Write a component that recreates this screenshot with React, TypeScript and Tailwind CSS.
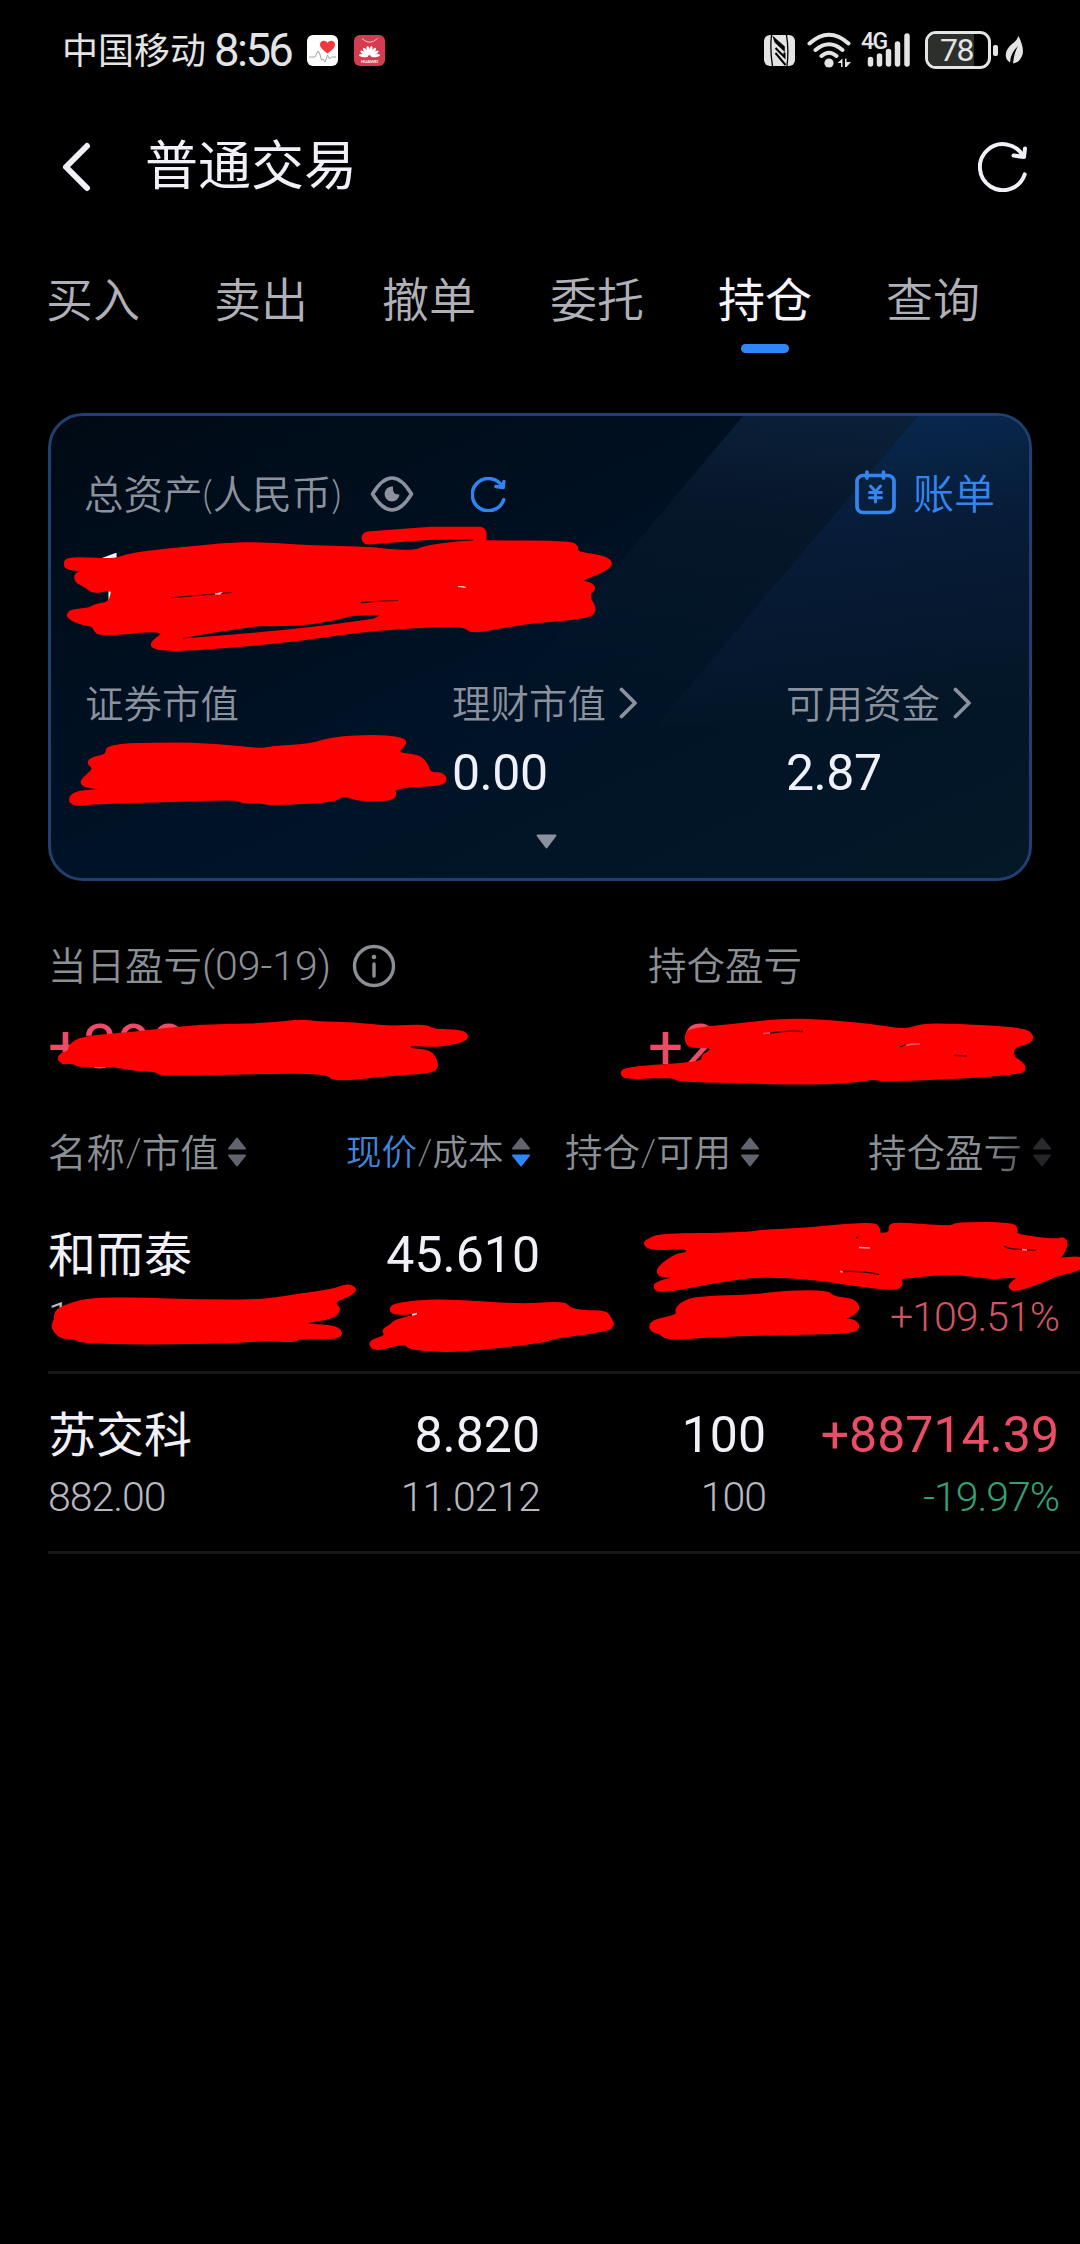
import React from "react";

type P = [number, number];

/* Smooths a closed outline by running quadratic curves through edge midpoints. */
function blob(flat: number[]): string {
  const pts: P[] = [];
  for (let i = 0; i < flat.length; i += 2) pts.push([flat[i], flat[i + 1]]);
  const n = pts.length;
  const mid = (a: P, b: P): P => [(a[0] + b[0]) / 2, (a[1] + b[1]) / 2];
  const start = mid(pts[n - 1], pts[0]);
  let d = `M${start[0]} ${start[1]}`;
  for (let i = 0; i < n; i++) {
    const m = mid(pts[i], pts[(i + 1) % n]);
    d += `Q${pts[i][0]} ${pts[i][1]} ${m[0]} ${m[1]}`;
  }
  return d + "Z";
}

const SCRIBBLES: number[][] = [
  [67,558,90,558,104,559,117,558.5,125,555.5,145,551.7,190,547,229,543.3,260,542.7,305,545.7,376,547.7,386,550,414,551,424,546.7,460,541.3,489,541,571,541.7,578,546.7,577,552.7,604,555.7,613.6,563.3,604,571.7,579,580.7,592,583.3,595.6,589.3,588,595,597,610,588,618.3,527,622.7,470,634,465,625,397,628.3,355,632.3,290,641.7,198,650,156,650.3,149,643.3,169,629.3,100,636,94,630,93,626,80,624,68,618.3,67.5,613.3,72,610,89,608.3,95,605,108,602.7,111,596,112,589.3,93,593.3,87,587.7,75,581.7,75,573.3,85,570.7,66,569.3,64,563.3],
  [106,745,168,742.7,216,744.3,261,749.3,268,747,311,744.3,330,738,371,735,402,737.3,407,743.3,396,753.3,419,755,427,763.3,430,773.3,442,772.7,447,779.3,442,785,394,787.7,396,795,392,800,361,801,342,795,335,801.7,268,805,262,802.3,243,803.3,237,799,161,801.7,95,803.3,75,806,68,800,75,791,109,789.3,85,787.3,80,781.7,87,775,94,768.3,87,763.3,92,757.3,107,755],
  [69,1045,82,1036.7,133,1032.7,178,1027.3,209,1025,268,1024,302,1019.7,316,1022.3,354,1022.7,388,1027,426,1024.7,433,1030,462,1030,469,1036.7,462,1042.3,436,1046.7,409,1044.7,410,1049.3,431,1050,439,1065,433,1072.7,392,1075,333,1081.3,327,1072.7,250,1073.3,161,1075.7,155,1070.7,135,1070.7,114,1066,78,1066.7,73,1062.7,63,1064,57,1058.3,63,1052.3,69,1051.7],
  [685,1035,690,1029,733,1024.7,781,1019.3,815,1019.7,874,1024.7,905,1030.3,922,1024,953,1024.3,1025,1028,1034,1036.7,1029,1043.3,1014,1046.7,1013,1056.7,1022,1062.3,1026,1068.3,1020,1074,953,1078.3,881,1081.3,876,1078.3,850,1082.7,798,1084.3,733,1082.3,678,1081.3,672,1076.7,626,1079,620,1073.3,626,1067.3,702,1062.7,702,1055,711,1050.7,709,1046.7,691,1047.7,686,1043.3],
  [55,1310,72,1302.7,91,1298.7,137,1298,198,1300.3,265,1300.3,298,1294.3,332,1290,348,1284,357,1289,351,1295,333,1302.3,341,1308.3,334,1318.3,306,1322.3,307,1324.3,336,1326,343,1333.3,336,1339,301,1337.7,294,1342,267,1340,233,1342.7,145,1344,80,1342.7,75,1338.3,60,1338.3,51,1326.7,55,1320],
  [389,1309.3,395,1303.3,439,1299,520,1305,564,1301.7,570,1308.3,583,1311,606,1311,611,1318.3,614,1325,608,1330.7,552,1338.3,546,1341.7,458,1352.3,409,1349.3,405,1342.7,376,1351,369,1345,372,1340,386,1336,382,1330,391,1325,395,1320,433,1311,395,1315.3],
  [643,1243,650,1238,663,1234,740,1233.3,767,1230,800,1229,873,1222,880,1228,879,1234,890,1233,889,1225,897,1222.7,950,1227,957,1222.7,1013,1223,1018,1230,1015,1235,1057,1240,1063,1237,1068,1243,1063,1255,1058,1259,1084,1256,1084,1269,1055,1276,1050,1279,1015,1292,1008,1287,1013,1281,1020,1277,1000,1277.5,995,1279,950,1273,907,1278,900,1278,903,1285,895,1290,860,1286,813,1279,760,1276,717,1282,660,1293,653,1287,658,1281,693,1274,662,1278,656,1271,663,1263,677,1254,687,1253,687,1248,650,1250],
  [675,1310,682,1302,697,1297,757,1295,787,1291,828,1291,833,1297,853,1299,860,1307,855,1314,843,1319,855,1320,860,1327,853,1333,800,1334,717,1336,667,1340,660,1333,652,1332,649,1325,655,1320,678,1315],
];

function Scribbles() {
  return (
    <svg className="pointer-events-none absolute left-0 top-0 h-[1400px] w-[1080px]" viewBox="0 0 1080 1400" fill="none">
      {SCRIBBLES.map((s, i) => (
        <path key={i} d={blob(s)} fill="#ff0000" stroke="#ff0000" strokeWidth="1.5" strokeLinejoin="round" />
      ))}
      <path d="M368 538L431 533.3H480V546" stroke="#ff0000" strokeWidth="13" strokeLinecap="round" strokeLinejoin="round" />
      <path d="M183 638Q222 631 260 626Q312 628 352 616L380 615L374 618.5Q300 630 183 638.5Z" fill="#00101e" />
      <path d="M171 597.500L232 592.500L214 594L171 598ZM361 603Q380 600.500 398 600.500L361 602Z" fill="#00101e" stroke="#00101e" strokeWidth=".4" />
      <path d="M215 594L222 592.3L220 594.3ZM458 586.5L464 586.7L466 587.5Z" fill="#eee" stroke="#eee" strokeWidth=".6" />
      <path d="M770 1033Q787 1030.500 803 1031.500M900 1047L906 1044.500M954 1055.3L967 1055.8M842 1271.5Q862 1270.500 879 1274.5M1004 1246Q1008 1250 1036 1250M856 1237.5H858" stroke="#2c0505" strokeWidth="1.3" />
      <path d="M763 1033.5L770 1033M906 1045.500Q911 1043.500 920 1044" stroke="#ee4b66" strokeWidth="1.6" />
      <path d="M859 1247.5L870 1248M840 1271.5L843 1272M1022 1249.5L1027 1250" stroke="#f0a0a8" strokeWidth="1.3" />
      <path d="M412 1315L417 1313.5" stroke="#ddd" strokeWidth="1.600" />
    </svg>
  );
}

function Reload({ className, width }: { className: string; width: number }) {
  return (
    <svg className={className} viewBox="0 0 50 50" fill="none" stroke="currentColor" strokeWidth={width} strokeLinecap="round" strokeLinejoin="round">
      <path d="M46.7 32.4A23 23 0 1 1 45 14" />
      <path d="M47 6.500L46 15L35.500 13.500" />
    </svg>
  );
}

function Chevron() {
  return (
    <svg className="h-[32px] w-[19px]" viewBox="0 0 19 32" fill="none" stroke="#8b919d" strokeWidth="3.8" strokeLinecap="round" strokeLinejoin="round">
      <path d="M2.500 2.500L16 16L2.500 29.500" />
    </svg>
  );
}

function Sort({ down = "#61646e", up = "#61646e" }: { down?: string; up?: string }) {
  return (
    <svg className="h-[30px] w-[18px] shrink-0" viewBox="0 0 18 30">
      <path d="M9 1.500L17 11.500H1Z" fill={up} stroke={up} strokeWidth="2" strokeLinejoin="round" />
      <path d="M9 28.500L17 18.500H1Z" fill={down} stroke={down} strokeWidth="2" strokeLinejoin="round" />
    </svg>
  );
}

function StatusBar() {
  return (
    <div className="flex h-[100px] items-center pl-[62px] text-[#e4e4e4]">
      <span className="w-[152px] text-[36px] leading-[40px]">中国移动</span>
      <span className="w-[93px] pt-[2px] font-[Roboto] text-[45.500px] leading-[50px] tracking-[-2.6px]">8:56</span>
      <svg className="h-[31px] w-[31px]" viewBox="0 0 31 31">
        <rect width="31" height="31" rx="6" fill="#fff" />
        <path d="M20.500 18.500C15 14.500 13 12 13 9.500C13 5.500 18.500 4.500 20.500 8C22.500 4.500 28 5.500 28 9.500C28 12 26 14.500 20.500 18.500Z" fill="#f0383f" />
        <path d="M2 22H8L9.500 19L11 16L12.500 18L14.500 25L16 24L18 27L20.500 20L22.500 24L24.500 22H29" fill="none" stroke="#999" strokeWidth=".9" />
      </svg>
      <svg className="ml-[16px] h-[31px] w-[31px]" viewBox="0 0 31 31">
        <rect width="31" height="31" rx="6" fill="#d63c50" />
        <path d="M8 3.500Q15.500 11 23.500 3.500" fill="none" stroke="#f5c3c8" strokeWidth="1" />
        <g fill="#fff">
          {[-82, -58, -36, -12, 12, 36, 58, 82].map((a) => (
            <ellipse key={a} cx="15.500" cy="15.500" rx="1.500" ry="4.600" transform={`rotate(${a} 15.500 21.500)`} />
          ))}
        </g>
        <text x="15.500" y="28" textAnchor="middle" fontSize="4.200" fontWeight="700" fill="#fff" textLength="17">HUAWEI</text>
      </svg>

      <svg className="ml-[379px] h-[31px] w-[31px]" viewBox="0 0 31 31" fill="none" stroke="#000">
        <rect width="31" height="31" rx="6" fill="#e4e4e4" stroke="none" />
        <path d="M7.500 0Q5.800 15 8.500 31M22.500 0Q25 15 23 31" strokeWidth="1.300" />
        <path d="M8.500 1L20.500 11.500V16.500L10.500 7" fill="#000" strokeWidth=".6" />
        <path d="M11.500 13L20.500 22V17.500M11.500 18L21.500 30" strokeWidth="2" />
      </svg>
      <svg className="ml-[12px] h-[36px] w-[46px]" viewBox="0 0 46 36" fill="none" stroke="#e4e4e4" strokeWidth="4" strokeLinecap="round">
        <path d="M2.500 11.500Q22 -6 41.500 11.500M8.500 18Q22 6.500 35.500 18M14.500 24Q22 17.500 29.500 24" />
        <circle cx="22" cy="31" r="4.600" fill="#e4e4e4" stroke="none" />
        <path d="M30.500 31L35.500 26.500V35H34V31ZM38 26.500H39.500V30H44L39.500 35H38Z" fill="#e4e4e4" stroke="none" />
      </svg>
      <div className="relative ml-[9px] h-[36px] w-[52px]">
        <svg className="h-[36px] w-[52px]" viewBox="0 0 52 36" fill="none" stroke="#e4e4e4" strokeWidth="5.500" strokeLinecap="round">
          <path d="M8.500 27.500V32M17.500 24V32M26.500 19.500V32M35.500 12V32M45 4V32" />
        </svg>
        <span className="absolute -left-[1px] -top-[2px] font-[Roboto] text-[23px] font-medium leading-[24px] tracking-[-1.500px]">4G</span>
      </div>
      <div className="ml-[11px] flex h-[38px] w-[66px] rounded-[11px] border-[3px] border-[#e4e4e4]">
        <div className="flex w-[46px] items-center justify-end rounded-l-[8px] bg-[#2d2f2d] pr-[1px] font-[Roboto] text-[32px] leading-[30px] tracking-[-1.500px]">78</div>
      </div>
      <div className="ml-[2px] h-[11px] w-[5px] rounded-[2px] bg-[#e4e4e4]" />
      <svg className="ml-[7px] h-[30px] w-[19px]" viewBox="0 0 19 30">
        <path d="M13.500 1Q20 14 17 21Q14 28 8 28.500Q9 18 13 11Q5.500 18 5 27.500Q-1 24 1.500 16Q4 10.500 9 7.500Q12 5 13.500 1Z" fill="#e4e4e4" />
      </svg>
    </div>
  );
}

function Card() {
  return (
    <section className="relative mx-[48px] mt-[60px] h-[468px] overflow-hidden rounded-[35px] border-[3px] border-[#20406f] bg-linear-to-br from-[#000a14] via-[#001226] to-[#051828] pt-[53px]">
      <svg className="absolute inset-0 h-full w-full" viewBox="0 0 978 462" preserveAspectRatio="none">
        <defs>
          <linearGradient id="beamA" x1="0.600" y1="0" x2="0.450" y2="1">
            <stop offset="0" stopColor="#0a2038" />
            <stop offset=".3" stopColor="#07172b" />
            <stop offset="1" stopColor="#051828" stopOpacity="0" />
          </linearGradient>
          <linearGradient id="beamB" x1="0.600" y1="0" x2="0.750" y2="1">
            <stop offset="0" stopColor="#08284e" />
            <stop offset=".35" stopColor="#071c38" />
            <stop offset=".7" stopColor="#06182f" />
            <stop offset="1" stopColor="#051828" stopOpacity="0" />
          </linearGradient>
        </defs>
        <path d="M692 0H978V300H440Z" fill="url(#beamA)" />
        <path d="M867 0H978V310H605Z" fill="url(#beamB)" />
      </svg>
      <div className="relative">
        <div className="flex h-[50px] items-center pl-[33px] text-[39px] leading-[50px] text-[#8b919d]">
          <span className="w-[286px] text-[39.500px] font-[350]">总资产(人民币)</span>
          <svg className="h-[36px] w-[44px]" viewBox="0 0 44 36" fill="none">
            <path d="M2.500 18Q22 -14 41.500 18Q22 50 2.500 18Z" stroke="currentColor" strokeWidth="3.600" strokeLinejoin="round" />
            <path d="M23 10.500A7.500 7.500 0 1 0 29.500 18.500Q22 19 23 10.500Z" fill="currentColor" />
          </svg>
          <Reload className="ml-[57px] h-[35px] w-[35px] text-[#3084f0]" width={5} />
          <svg className="-mt-[4px] ml-[349px] h-[46px] w-[41px] text-[#3486ee]" viewBox="0 0 41 46" fill="none" stroke="currentColor" strokeWidth="3.700" strokeLinecap="round">
            <rect x="2" y="6.500" width="37" height="37" rx="6" />
            <path d="M12 3V9M28.500 3V9" />
            <path d="M15.500 17L20.500 22.500L25.500 17M20.500 22.500V33M14.500 23.500H26.500M14.500 28.800H26.500" strokeWidth="3" />
          </svg>
          <span className="ml-[17px] text-[41px] font-[350] text-[#3486ee]">账单</span>
        </div>
        <div className="mt-[25px] pl-[40px] font-[Roboto] text-[68px] font-medium leading-[70px] text-[#f0f0f6]">1</div>
        <div className="mt-[64px] grid grid-cols-[367px_334px_auto] pl-[34px]">
          {[["证券市值", ""], ["理财市值", "0.00"], ["可用资金", "2.87"]].map(([k, v]) => (
            <div key={k}>
              <div className="flex h-[50px] items-center gap-[13px] text-[38.500px] font-[350] leading-[50px] text-[#8b919d]">
                {k}
                {v && <Chevron />}
              </div>
              <div className="mt-[20px] h-[50px] font-[Roboto] text-[50px] leading-[50px] tracking-[-0.500px] text-[#f0f0fa]">{v}</div>
            </div>
          ))}
        </div>
        <svg className="ml-[485px] mt-[36px] h-[15px] w-[21px]" viewBox="0 0 21 15">
          <path d="M1.500 1.500H19.500L10.500 13.500Z" fill="#8b919d" stroke="#8b919d" strokeWidth="2" strokeLinejoin="round" />
        </svg>
      </div>
    </section>
  );
}

const ROWS = [
  { name: "和而泰", value: "1", price: "45.610", cost: "", held: "", free: "", gain: "", rate: "+109.51%", tone: "text-[#cf5565]" },
  { name: "苏交科", value: "882.00", price: "8.820", cost: "11.0212", held: "100", free: "100", gain: "+88714.39", rate: "-19.97%", tone: "text-[#34a077]" },
];

export default function App() {
  return (
    <div className="relative h-[2244px] w-[1080px] overflow-hidden bg-black font-[Lato,'Noto_Sans_CJK_SC',sans-serif]">
      <StatusBar />
      <header className="flex h-[130px] items-center pl-[61px] pt-[3px] text-[#f0f0f8]">
        <svg className="h-[52px] w-[31px]" viewBox="0 0 31 52" fill="none" stroke="currentColor" strokeWidth="6" strokeLinecap="round" strokeLinejoin="round">
          <path d="M26 5L5 26L26 47" />
        </svg>
        <h1 className="-mt-[4px] ml-[53px] w-[833px] text-[53px] font-normal leading-[60px]">普通交易</h1>
        <Reload className="h-[50px] w-[50px]" width={4} />
      </header>

      <nav className="mt-[39px] flex h-[84px] gap-[74px] pl-[46px] text-[47px] font-[350] leading-[60px] text-[#b0b0b8]">
        <span>买入</span>
        <span>卖出</span>
        <span>撤单</span>
        <span>委托</span>
        <span className="flex flex-col items-center font-normal text-[#f4f4fa]">
          持仓
          <i className="mt-[15px] block h-[9px] w-[48px] rounded-full bg-[#2f86f6]" />
        </span>
        <span>查询</span>
      </nav>

      <Card />

      <section className="mt-[59px] grid grid-cols-[600px_auto] pl-[48px] text-[38.500px] font-[350] leading-[50px] text-[#8b9097]">
        <div>
          <div className="flex h-[50px] items-center">
            <span className="w-[304px]">当日盈亏<span className="font-[Roboto] text-[41px] font-light">(09-19)</span></span>
            <svg className="mt-[2px] h-[44px] w-[44px]" viewBox="0 0 44 44" fill="none" stroke="currentColor" strokeWidth="3.400" strokeLinecap="round">
              <circle cx="22" cy="22" r="19.500" />
              <path d="M22 20V32" />
              <circle cx="22" cy="13" r="2.300" fill="currentColor" stroke="none" />
            </svg>
          </div>
          <div className="mt-[22px] font-[Roboto] text-[62px] font-normal leading-[70px] tracking-[-0.500px] text-[#ee4b66]">+398</div>
        </div>
        <div>
          <div className="h-[50px]">持仓盈亏</div>
          <div className="mt-[22px] font-[Roboto] text-[62px] font-normal leading-[70px] tracking-[-0.500px] text-[#ee4b66]">+2</div>
        </div>
      </section>

      <div className="mt-[50px] flex h-[40px] items-center pl-[48px] text-[38.500px] font-[350] leading-[40px] text-[#8b9097]">
        <div className="flex w-[298px] items-center gap-[9px]">名称/市值<Sort /></div>
        <div className="flex w-[219px] items-center gap-[9px] text-[35.500px]">
          <span><span className="text-[#3d86dc]">现价</span>/成本</span>
          <Sort down="#2f86f6" />
        </div>
        <div className="flex w-[303px] items-center gap-[10px] text-[37.500px]">持仓/可用<Sort /></div>
        <div className="flex items-center gap-[11px]">
          <span>持仓盈<span className="bg-linear-to-r from-[#8b9097] to-[#505358] bg-clip-text text-transparent">亏</span></span>
          <Sort up="#2a2b2f" down="#232428" />
        </div>
      </div>

      <div className="mt-[22px] pl-[48px]">
        {ROWS.map((r) => (
          <div key={r.name} className="flex h-[180px] border-b-[3px] border-[#141818] pt-[30px] font-[Roboto,'Noto_Sans_CJK_SC',sans-serif] text-[50px] leading-[60px] text-[#f0f0f8]">
            <div className="w-[260px]">
              <div className="font-[Lato,'Noto_Sans_CJK_SC',sans-serif] text-[48px]">{r.name}</div>
              <div className="mt-[8px] text-[41px] font-light leading-[50px] tracking-[-1px] text-[#b8b8c0]">{r.value}</div>
            </div>
            <div className="w-[232px] text-right">
              <div className="h-[60px] pt-[1px]">{r.price}</div>
              <div className="mt-[8px] text-[41px] font-light leading-[50px] tracking-[-1px] text-[#b8b8c0]">{r.cost}</div>
            </div>
            <div className="w-[226px] text-right">
              <div className="h-[60px] pt-[1px]">{r.held}</div>
              <div className="mt-[8px] text-[41px] font-light leading-[50px] tracking-[-1px] text-[#b8b8c0]">{r.free}</div>
            </div>
            <div className="w-[293px] text-right">
              <div className="h-[60px] pt-[1px] text-[#ea4d65]">{r.gain}</div>
              <div className={`mt-[8px] text-[41px] font-light leading-[50px] tracking-[-1px] ${r.tone}`}>{r.rate}</div>
            </div>
          </div>
        ))}
      </div>

      <Scribbles />
    </div>
  );
}
